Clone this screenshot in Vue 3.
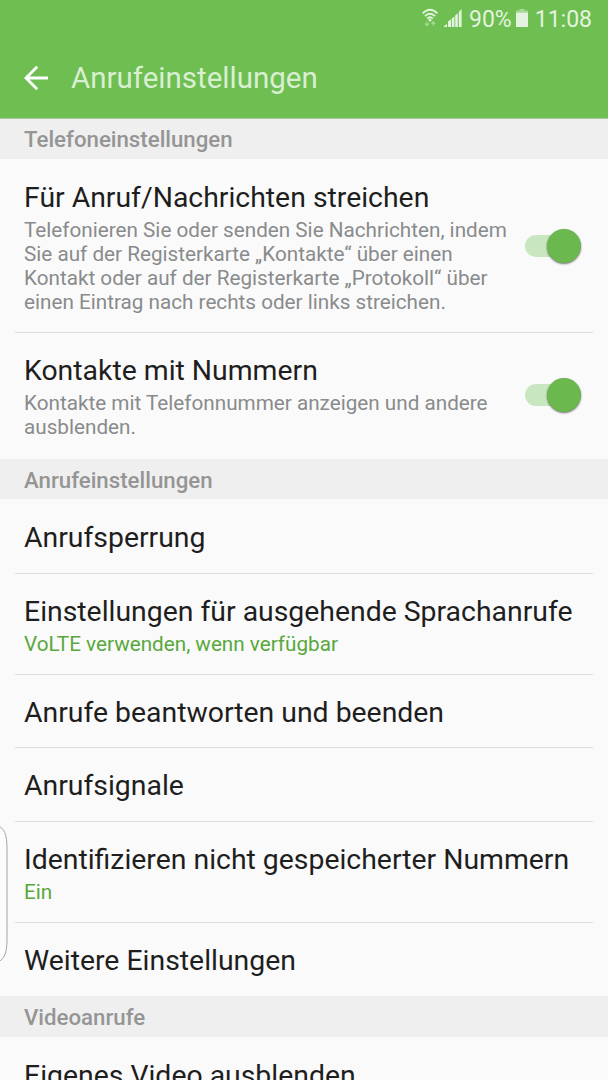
<script setup>
import { ref } from 'vue';

const sections = ref([
    {
        title: 'Telefoneinstellungen',
        items: [
            {
                title: 'Für Anruf/Nachrichten streichen',
                summary: 'Telefonieren Sie oder senden Sie Nachrichten, indem Sie auf der Registerkarte „Kontakte“ über einen Kontakt oder auf der Registerkarte „Protokoll“ über einen Eintrag nach rechts oder links streichen.',
                enabled: true
            },
            {
                title: 'Kontakte mit Nummern',
                summary: 'Kontakte mit Telefonnummer anzeigen und andere ausblenden.',
                enabled: true
            }
        ]
    },
    {
        title: 'Anrufeinstellungen',
        items: [
            { title: 'Anrufsperrung' },
            { title: 'Einstellungen für ausgehende Sprachanrufe', value: 'VoLTE verwenden, wenn verfügbar' },
            { title: 'Anrufe beantworten und beenden' },
            { title: 'Anrufsignale' },
            { title: 'Identifizieren nicht gespeicherter Nummern', value: 'Ein' },
            { title: 'Weitere Einstellungen' }
        ]
    },
    {
        title: 'Videoanrufe',
        items: [
            { title: 'Eigenes Video ausblenden' }
        ]
    }
]);

function toggleItem(item) {
    if(item.enabled !== undefined){
        item.enabled = !item.enabled;
    }
}
</script>

<template>
    <div class="screen">
        <header class="app-header">
            <div class="status-bar">
                <svg class="wifi-icon" width="16" height="20" viewBox="0 0 16 20">
                    <g fill="none" stroke="currentColor" stroke-width="1.8">
                        <path d="M0.6 5.4Q8 -1.8 15.4 5.4" />
                        <path d="M2.9 8.2Q8 3.2 13.1 8.2" />
                        <path d="M5.2 10.7Q8 7.8 10.8 10.7" />
                    </g>
                    <circle cx="8" cy="12.2" r="1.4" fill="currentColor" />
                    <path d="M5 13.5V17M3.2 15.5L5 17.6L6.8 15.5M11.3 18V14M9.5 15.8L11.3 13.7L13.1 15.8" fill="none" stroke="currentColor" stroke-width="1.2" opacity="0.5" />
                </svg>
                <svg class="signal-icon" width="18" height="18" viewBox="0 0 18 18" fill="currentColor">
                    <path d="M0 18V17L3 15V18zM4 18V12.4L7 10.2V18zM7.8 18V9.6L10.4 7.4V18zM11.2 18V6.6L13.8 4.2V18zM14.8 18V3L17.6 0V18z" />
                </svg>
                <span class="battery-level">90%</span>
                <svg class="battery-icon" width="12" height="18" viewBox="0 0 12 18" fill="currentColor">
                    <path d="M3.5 0H8.5V1.5H12V3.5H0V1.5H3.5z" opacity="0.5" />
                    <path d="M0 3.5H12V18H0z" />
                </svg>
                <span class="clock">11:08</span>
            </div>
            <div class="title-bar">
                <svg class="back-icon" width="24" height="26" viewBox="0 0 24 26" fill="none" stroke="currentColor" stroke-width="2.9">
                    <path d="M13.2 1.8L2 13L13.2 24.2M2 13H24" />
                </svg>
                <h1>Anrufeinstellungen</h1>
            </div>
        </header>

        <section v-for="section in sections" :key="section.title">
            <h2 class="section-title">{{ section.title }}</h2>
            <ul class="settings-list">
                <li v-for="item in section.items" :key="item.title" class="setting" @click="toggleItem(item)">
                    <div class="setting-text">
                        <div class="setting-title">{{ item.title }}</div>
                        <div v-if="item.summary" class="setting-summary">{{ item.summary }}</div>
                        <div v-if="item.value" class="setting-summary setting-value">{{ item.value }}</div>
                    </div>
                    <span v-if="item.enabled !== undefined" class="switch" :class="{ off: !item.enabled }">
                        <span class="switch-knob"></span>
                    </span>
                </li>
            </ul>
        </section>

        <!-- Handle of the edge panel, lies over the list -->
        <svg class="edge-handle" width="9" height="138" viewBox="0 0 9 138">
            <path d="M-2 1C4 3 7 9 7 24V114C7 129 4 134 -2 137" fill="#fcfcfc" stroke="#a5a5a5" stroke-width="1" />
        </svg>
    </div>
</template>

<style>
body {
    margin: 0;
    background-color: #fafafa;
}
</style>

<style scoped>
.screen {
    position: relative;
    height: 1080px;
    overflow: hidden;
    background-color: #fafafa;
    font-family: Roboto, "Liberation Sans", sans-serif;
    color: #1e1e1e;
}

.app-header {
    box-sizing: border-box;
    height: 118.6px;
    background-color: #6ebe52;
    border-bottom: 1px solid #a9c99e;
}

.status-bar {
    display: flex;
    justify-content: flex-end;
    align-items: center;
    height: 36px;
    padding-right: 16px;
    color: #e4f3df;
    font-size: 23px;
    line-height: 34px;
}

.status-bar span {
    padding-top: 3px;
}

.wifi-icon {
    margin-right: 6px;
}

.signal-icon {
    margin-right: 7px;
}

.battery-level {
    margin-right: 4px;
}

.battery-icon {
    margin-right: 7px;
}

.title-bar {
    display: flex;
    align-items: center;
    height: 82px;
    padding-top: 1px;
    padding-left: 24px;
    box-sizing: border-box;
    color: #ffffff;
}

.title-bar h1 {
    margin: 0 0 0 23px;
    font-size: 29.5px;
    font-weight: 400;
    color: #d9efd1;
}

.section-title {
    box-sizing: border-box;
    height: 40.5px;
    margin: 0;
    padding-left: 24px;
    background-color: #efefef;
    color: #959595;
    font-size: 22.25px;
    font-weight: 500;
    line-height: 41px;
}

section + section .section-title {
    line-height: 42.5px;
}

.settings-list {
    margin: 0;
    padding: 0 15px 0.8px;
    list-style: none;
}

.setting {
    display: flex;
    justify-content: space-between;
    align-items: center;
    padding: 21px 12px 18.4px 9px;
    border-top: 1px solid transparent;
}

.setting + .setting {
    border-top-color: #dedede;
}

.setting-title {
    font-size: 28.38px;
    line-height: 33px;
    white-space: nowrap;
}

.setting-summary {
    width: 490px;
    margin-top: 4px;
    color: #898b8c;
    font-size: 20.7px;
    line-height: 24px;
}

.setting-value {
    color: #58a83c;
}

.switch {
    position: relative;
    flex: none;
    width: 56px;
    height: 22px;
    margin-bottom: 3px;
    border-radius: 11px;
    background-color: #c8e6bf;
}

.switch-knob {
    position: absolute;
    top: -6px;
    right: 0;
    width: 34px;
    height: 34px;
    border-radius: 50%;
    background-color: #6bb84f;
    box-shadow: 0 1px 2px rgba(0, 0, 0, 0.55);
}

.switch.off {
    background-color: #c4c4c4;
}

.switch.off .switch-knob {
    right: 22px;
    background-color: #f2f2f2;
}

.edge-handle {
    position: absolute;
    top: 825px;
    left: 0;
}
</style>
